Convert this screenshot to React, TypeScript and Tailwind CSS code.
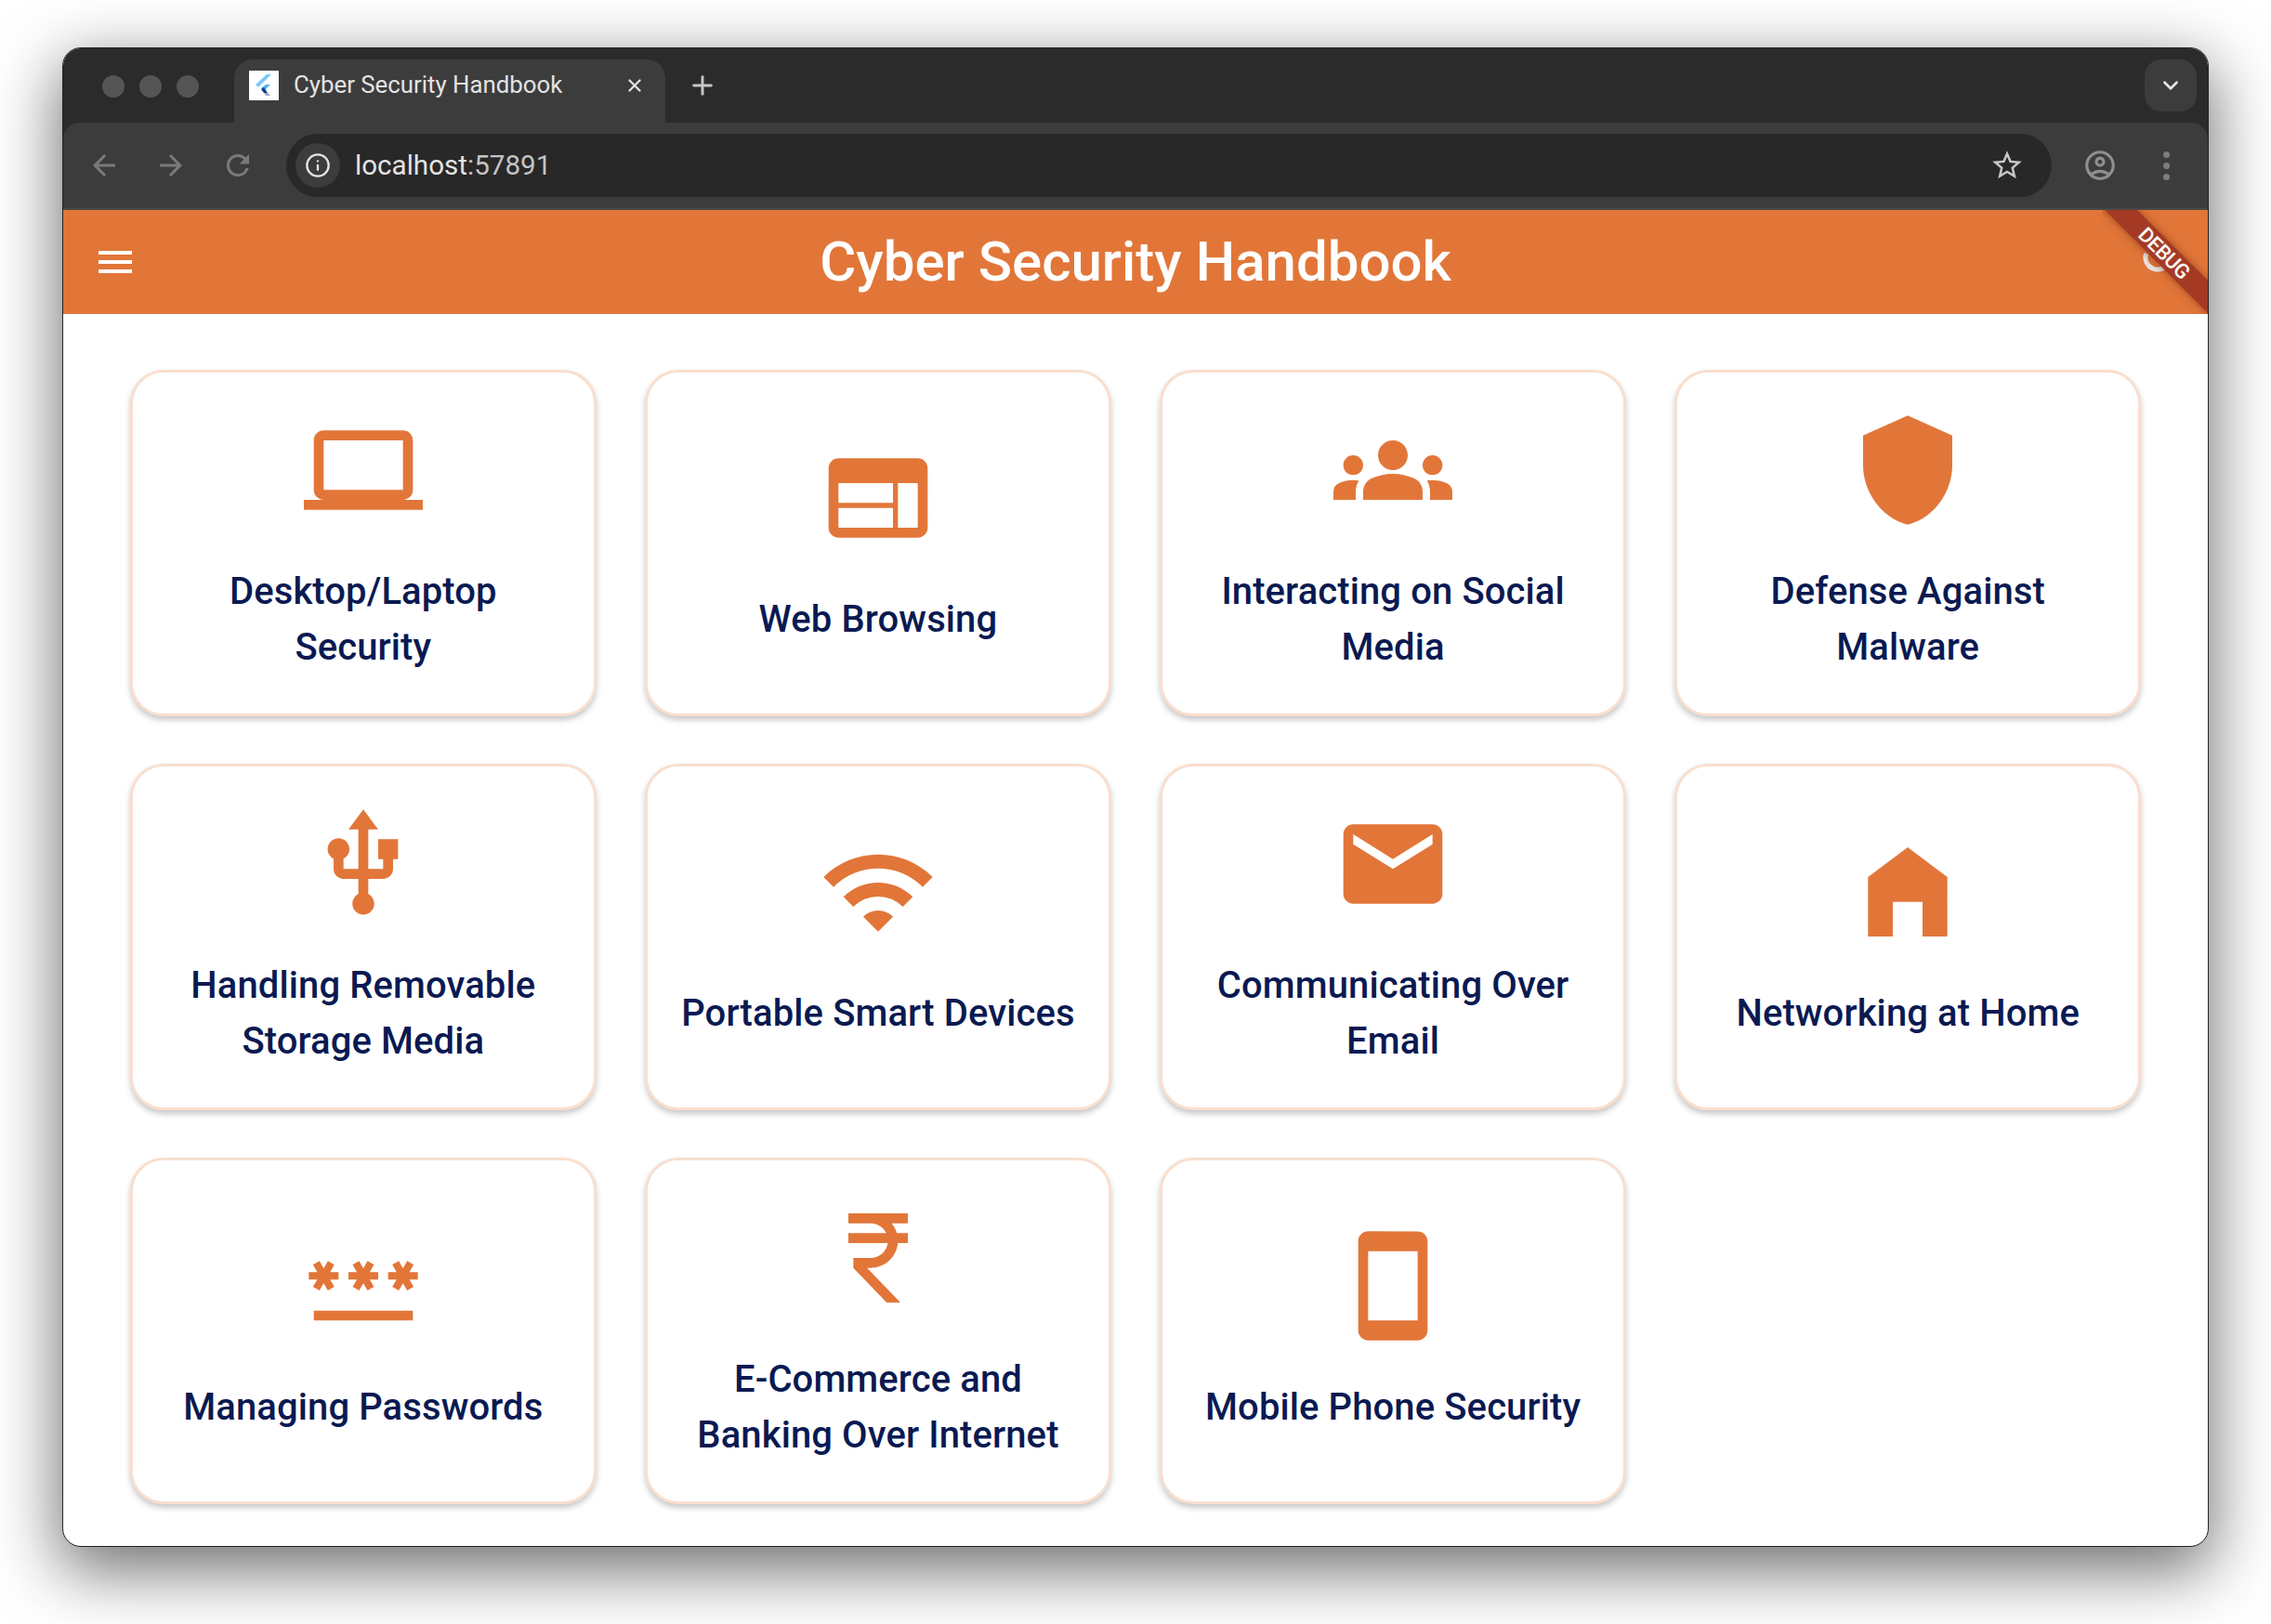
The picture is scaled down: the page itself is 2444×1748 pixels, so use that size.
import { ReactNode } from "react";
import {
  MdArrowBack,
  MdArrowForward,
  MdCurrencyRupee,
  MdEmail,
  MdGroups,
  MdHomeFilled,
  MdLaptop,
  MdMenu,
  MdOutlineAccountCircle,
  MdPassword,
  MdRefresh,
  MdSmartphone,
  MdStarBorder,
  MdUsb,
  MdWeb,
  MdWifi,
} from "react-icons/md";
import { LuChevronDown, LuInfo, LuPlus, LuX } from "react-icons/lu";

const ShieldIcon = ({ size }: { size: number }) => (
  <svg width={size} height={size} viewBox="0 0 24 24" fill="currentColor">
    <path d="M12 1L3 5v6c0 5.55 3.84 10.74 9 12 5.16-1.26 9-6.45 9-12V5l-9-4z" />
  </svg>
);

const FlutterFavicon = () => (
  <svg width="32" height="32" viewBox="0 0 32 32" className="shrink-0">
    <rect width="32" height="32" fill="#ffffff" />
    <path d="M19 4h5L10 18l-3-3z" fill="#7cc8fa" />
    <path d="M18 15h5l-7 7-3-3z" fill="#54b5f0" />
    <path d="M13 20l3-2 4 6h-4z" fill="#0d3f96" />
    <path d="M16 24h4l3 3h-5z" fill="#9ba6c4" />
  </svg>
);

const cards: { title: string[]; icon: ReactNode }[] = [
  { title: ["Desktop/Laptop", "Security"], icon: <MdLaptop size={128} /> },
  { title: ["Web Browsing"], icon: <MdWeb size={128} /> },
  { title: ["Interacting on Social", "Media"], icon: <MdGroups size={128} /> },
  { title: ["Defense Against", "Malware"], icon: <ShieldIcon size={128} /> },
  { title: ["Handling Removable", "Storage Media"], icon: <MdUsb size={128} /> },
  { title: ["Portable Smart Devices"], icon: <MdWifi size={128} /> },
  { title: ["Communicating Over", "Email"], icon: <MdEmail size={128} /> },
  { title: ["Networking at Home"], icon: <MdHomeFilled size={128} /> },
  { title: ["Managing Passwords"], icon: <MdPassword size={128} /> },
  { title: ["E-Commerce and", "Banking Over Internet"], icon: <MdCurrencyRupee size={128} /> },
  { title: ["Mobile Phone Security"], icon: <MdSmartphone size={128} /> },
];

const TopicCard = ({ title, icon }: { title: string[]; icon: ReactNode }) => (
  <div className="flex h-[373px] flex-col items-center justify-center gap-[37px] rounded-[36px] border-[3px] border-[#f9dfce] bg-white shadow-[0_4px_6px_rgba(0,0,0,0.22)]">
    <div className="text-[#e27639]">{icon}</div>
    <div className="text-center text-[40px] leading-[60px] font-medium tracking-[0.1px] text-[#0a1a52]">
      {title.map((line) => (
        <div key={line}>{line}</div>
      ))}
    </div>
  </div>
);

const TabBar = () => (
  <div className="flex h-[80px] items-start bg-[#2b2b2b] pt-[12px]">
    <div className="flex w-[184px] shrink-0 items-center gap-4 pt-[17px] pl-[42px]">
      <div className="size-6 rounded-full bg-[#555555]" />
      <div className="size-6 rounded-full bg-[#555555]" />
      <div className="size-6 rounded-full bg-[#555555]" />
    </div>
    <div className="flex h-[68px] w-[464px] shrink-0 items-start rounded-t-[20px] bg-[#3c3c3c] pt-3 pl-4">
      <FlutterFavicon />
      <span className="ml-4 w-[356px] text-[25.8px] leading-[30px] text-[#e3e3e3]">
        Cyber Security Handbook
      </span>
      <LuX size={22} strokeWidth={2.6} className="mt-[5px] text-[#e3e3e3]" />
    </div>
    <LuPlus size={32} strokeWidth={2.2} className="mt-[12px] ml-6 text-[#c7c7c7]" />
    <div className="ml-auto mr-[12px] flex h-14 w-14 items-center justify-center rounded-[18px] bg-[#3c3c3c]">
      <LuChevronDown size={26} strokeWidth={2.6} className="text-[#e3e3e3]" />
    </div>
  </div>
);

const Toolbar = () => (
  <div className="bg-[#2b2b2b]">
    <div className="flex h-[94px] items-center rounded-t-[18px] border-b-2 border-[#474747] bg-[#3c3c3c]">
      <div className="flex w-[240px] shrink-0 items-center gap-[36px] pl-[26px] text-[#7a7a7a]">
        <MdArrowBack size={36} />
        <MdArrowForward size={36} />
        <MdRefresh size={36} />
      </div>
      <div className="flex h-[68px] w-[1900px] shrink-0 items-center rounded-full bg-[#282828] pr-[29px] pl-[10px]">
        <div className="flex size-12 items-center justify-center rounded-full bg-[#3c3c3c]">
          <LuInfo size={28} strokeWidth={2} className="text-[#e3e3e3]" />
        </div>
        <span className="ml-4 text-[29.6px] text-[#e3e3e3]">
          localhost<span className="text-[#c4c4c4]">:57891</span>
        </span>
        <MdStarBorder size={38} className="ml-auto text-[#c7c7c7]" />
      </div>
      <MdOutlineAccountCircle size={38} className="ml-[33px] text-[#8f8f8f]" />
      <div className="ml-[49px] flex flex-col gap-[5px]">
        <div className="size-[7px] rounded-full bg-[#7d7d7d]" />
        <div className="size-[7px] rounded-full bg-[#7d7d7d]" />
        <div className="size-[7px] rounded-full bg-[#7d7d7d]" />
      </div>
    </div>
  </div>
);

const DebugBanner = () => (
  <div className="absolute top-0 right-0 h-[112px] w-[114px] overflow-hidden">
    <svg width="36" height="36" viewBox="0 0 36 36" className="absolute top-[33px] left-[42px]">
      <circle cx="18" cy="18" r="13" fill="none" stroke="#e8e4e2" strokeWidth="5" opacity="0.25" />
      <path d="M5.5 14A13 13 0 0 0 24 29.5" fill="none" stroke="#e8e4e2" strokeWidth="5" />
    </svg>
    <div className="absolute top-[34px] -left-[23px] flex h-[25px] w-[180px] rotate-45 items-center justify-center bg-[#9e3422]/90 text-[22px] leading-[25px] font-medium tracking-[-0.5px] text-white shadow-[0_0_10px_rgba(90,30,10,0.5)]">
      DEBUG
    </div>
  </div>
);

export default function App() {
  return (
    <div className="min-h-[1748px] bg-white pt-[51px] pl-[67px] font-['Roboto',sans-serif]">
      <div className="h-[1614px] w-[2310px] overflow-hidden rounded-[20px] border border-[#222222] bg-white shadow-[0_22px_70px_4px_rgba(0,0,0,0.56)]">
        <TabBar />
        <Toolbar />
        <header className="relative flex h-[112px] items-center justify-center bg-[#e27639]">
          <MdMenu size={48} className="absolute top-[32px] left-[32px] text-white" />
          <h1 className="text-[60px] font-medium text-white">Cyber Security Handbook</h1>
          <DebugBanner />
        </header>
        <main className="grid grid-cols-4 gap-x-[52.5px] gap-y-[51px] px-[72px] pt-[60px]">
          {cards.map((card) => (
            <TopicCard key={card.title[0]} title={card.title} icon={card.icon} />
          ))}
        </main>
      </div>
    </div>
  );
}
